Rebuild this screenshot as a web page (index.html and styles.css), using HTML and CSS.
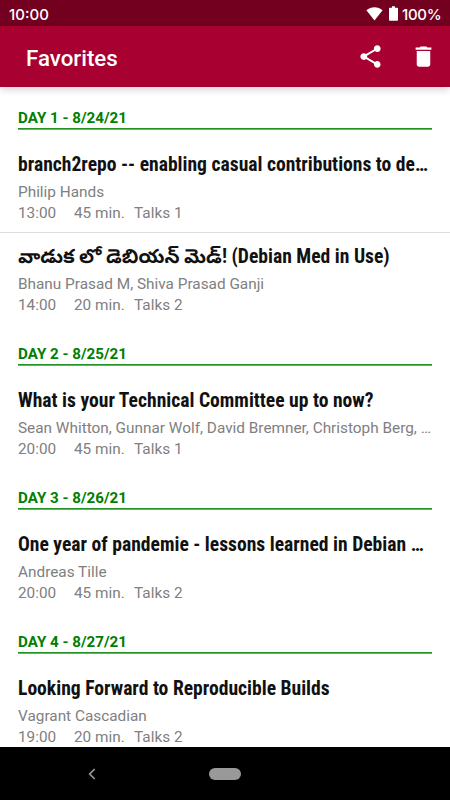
FILE: index.html
```html
<!DOCTYPE html>
<html lang="en">
<head>
  <meta charset="utf-8">
  <meta name="viewport" content="width=device-width, initial-scale=1.0">
  <title>Favorites</title>
  <link rel="stylesheet" href="styles.css">
</head>
<body>
  <div class="screen">
    <div class="status-bar">
      <span class="clock">10:00</span>
      <svg class="wifi" viewBox="0 0 17 14"><path d="M0.4 3.2C5 -0.7 12 -0.7 16.6 3.2L8.5 13.5z"/></svg>
      <svg class="battery" viewBox="0 0 9 15"><path d="M3 0.3h3v1.5h2.2q.8 0 .8.8v11.3q0 .8-.8.8H.8q-.8 0-.8-.8V2.6q0-.8.8-.8H3z"/></svg>
      <span class="percent">100%</span>
    </div>

    <header class="toolbar">
      <h1>Favorites</h1>
      <svg class="icon" viewBox="0 0 24 24"><path d="M18 16.08c-.76 0-1.44.3-1.96.77L8.91 12.7c.05-.23.09-.46.09-.7s-.04-.47-.09-.7l7.05-4.11c.54.5 1.25.81 2.04.81 1.66 0 3-1.34 3-3s-1.34-3-3-3-3 1.34-3 3c0 .24.04.47.09.7L8.04 9.81C7.5 9.31 6.79 9 6 9c-1.66 0-3 1.34-3 3s1.34 3 3 3c.79 0 1.5-.31 2.04-.81l7.12 4.16c-.05.21-.08.43-.08.65 0 1.61 1.31 2.92 2.92 2.92s2.92-1.31 2.92-2.92-1.31-2.92-2.92-2.92z"/></svg>
      <svg class="icon" viewBox="0 0 24 24"><path d="M6 19c0 1.1.9 2 2 2h8c1.1 0 2-.9 2-2V7H6v12zM19 4h-3.500l-1-1h-5l-1 1H5v2h14V4z"/></svg>
    </header>

    <main class="list">
      <h2 class="day">DAY 1 - 8/24/21</h2>
      <div class="talk">
        <h3>branch2repo -- enabling casual contributions to de…</h3>
        <p class="speakers">Philip Hands</p>
        <p class="meta"><span class="time">13:00</span><span class="length">45 min.</span><span>Talks 1</span></p>
      </div>
      <div class="talk divided">
        <h3><span class="telugu" lang="te">వాడుక లో డెబియన్ మెడ్!</span> (Debian Med in Use)</h3>
        <p class="speakers">Bhanu Prasad M, Shiva Prasad Ganji</p>
        <p class="meta"><span class="time">14:00</span><span class="length">20 min.</span><span>Talks 2</span></p>
      </div>

      <h2 class="day">DAY 2 - 8/25/21</h2>
      <div class="talk">
        <h3>What is your Technical Committee up to now?</h3>
        <p class="speakers">Sean Whitton, Gunnar Wolf, David Bremner, Christoph Berg, …</p>
        <p class="meta"><span class="time">20:00</span><span class="length">45 min.</span><span>Talks 1</span></p>
      </div>

      <h2 class="day">DAY 3 - 8/26/21</h2>
      <div class="talk">
        <h3>One year of pandemie - lessons learned in Debian …</h3>
        <p class="speakers">Andreas Tille</p>
        <p class="meta"><span class="time">20:00</span><span class="length">45 min.</span><span>Talks 2</span></p>
      </div>

      <h2 class="day">DAY 4 - 8/27/21</h2>
      <div class="talk">
        <h3>Looking Forward to Reproducible Builds</h3>
        <p class="speakers">Vagrant Cascadian</p>
        <p class="meta"><span class="time">19:00</span><span class="length">20 min.</span><span>Talks 2</span></p>
      </div>
    </main>

    <nav class="nav-bar">
      <svg class="back" viewBox="0 0 8 12"><path d="M6.700 1L1.700 6l5 5"/></svg>
      <span class="home"></span>
    </nav>
  </div>
</body>
</html>
```

FILE: styles.css
```css
* {
  box-sizing: border-box;
}
body {
  margin: 0;
  font-family: Roboto, "Noto Sans", sans-serif;
  background: #fff;
}
h1, h2, h3, p {
  margin: 0;
}
.screen {
  height: 800px;
  display: flex;
  flex-direction: column;
  overflow: hidden;
}

/* status bar */
.status-bar {
  flex: none;
  height: 26px;
  padding: 2px 9px 0;
  display: flex;
  align-items: center;
  background: #73001f;
  color: #fff;
  font-family: Inter, Roboto, sans-serif;
  font-size: 15px;
  font-weight: 500;
}
.status-bar svg {
  fill: #fff;
}
.clock {
  flex: 1;
}
.wifi {
  width: 17px;
  height: 14px;
  margin-right: 6px;
}
.battery {
  width: 9px;
  height: 15px;
  margin: -1px 4px 0 0;
}
.percent {
  width: 39px;
  letter-spacing: -0.3px;
}

/* toolbar */
.toolbar {
  flex: none;
  height: 61px;
  padding: 0 13px 0 26px;
  display: flex;
  align-items: center;
  gap: 26px;
  background: #a80030;
  color: #fff;
  box-shadow: 0 2px 8px rgba(0,0,0,0.2);
  z-index: 1;
}
.toolbar h1 {
  flex: 1;
  padding-top: 2px;
  font-size: 22.300px;
  font-weight: 500;
}
.icon {
  width: 27px;
  height: 27px;
  fill: #fff;
}

/* talks */
.list {
  flex: 1;
  min-height: 0;
  padding-top: 1px;
  overflow: hidden;
}
.day {
  height: 41px;
  margin: 0 18px 11px;
  padding-top: 20px;
  border-bottom: 1px solid #259225;
  box-shadow: 0 1px #66b366;
  color: #008000;
  font-size: 15.150px;
  line-height: 20px;
  font-weight: 700;
}
.talk {
  height: 92px;
  padding: 11px 18px 0;
}
.divided {
  padding-top: 10px;
  border-top: 1px solid #dedede;
}
.talk h3 {
  height: 28px;
  color: #111;
  font-family: "Roboto Condensed", Roboto, "Noto Sans Telugu", sans-serif;
  font-size: 19.600px;
  line-height: 28px;
  font-weight: 700;
  font-stretch: 75%;
  white-space: nowrap;
}
.talk p {
  height: 21px;
  color: #808080;
  font-size: 15.350px;
  line-height: 21px;
  white-space: nowrap;
}
.talk .speakers {
  margin-top: 3px;
}
.talk .meta {
  display: flex;
}
.time {
  width: 56px;
}
.length {
  width: 60px;
}

/* navigation bar */
.nav-bar {
  flex: none;
  height: 53px;
  display: grid;
  grid-template-columns: 88px 120px 1fr;
  align-items: center;
  background: #000;
}
.back {
  grid-column: 2;
  width: 8px;
  height: 12px;
  fill: none;
  stroke: #999;
  stroke-width: 1.700;
}
.home {
  width: 32px;
  height: 12px;
  margin-left: 1px;
  border-radius: 6px;
  background: #999;
}
```
